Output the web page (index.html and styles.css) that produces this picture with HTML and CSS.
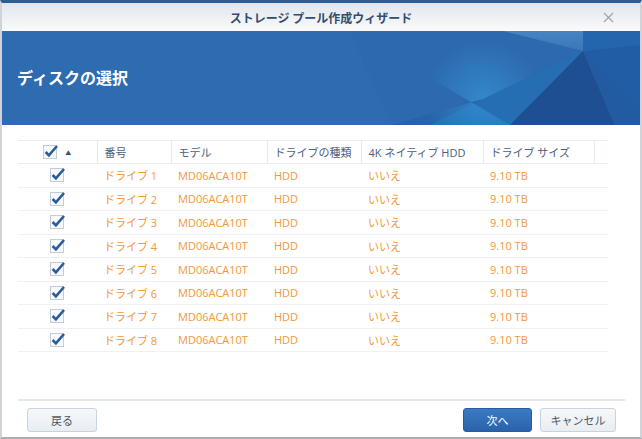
FILE: index.html
```html
<!DOCTYPE html>
<html lang="ja">
<head>
    <meta charset="UTF-8">
    <title>ストレージ プール作成ウィザード</title>
    <link rel="stylesheet" href="styles.css">
</head>
<body>
<div class="window">
    <div class="titlebar">
        <span></span>
        <span class="title">ストレージ プール作成ウィザード</span>
        <span class="close">
            <svg width="11" height="11" viewBox="0 0 11 11"><path d="M1 1 L10 10 M10 1 L1 10" stroke="#a0a6ad" stroke-width="1.3" fill="none"/></svg>
        </span>
    </div>

    <div class="banner">
        <svg class="banner_bg" viewBox="2 31 638 94" preserveAspectRatio="none">
            <defs>
                <radialGradient id="glow" cx="483" cy="99" r="60" gradientUnits="userSpaceOnUse">
                    <stop offset="0" stop-color="#3a9fe2" stop-opacity="0.55"/>
                    <stop offset="1" stop-color="#3a9fe2" stop-opacity="0"/>
                </radialGradient>
                <linearGradient id="wedge" x1="0" y1="0" x2="0" y2="1">
                    <stop offset="0" stop-color="#4784c2"/>
                    <stop offset="1" stop-color="#3877b9"/>
                </linearGradient>
            </defs>
            <polygon points="350,31 503,31 583,51 483,99 392,125" fill="#2c69ae"/>
            <polygon points="503,31 583,31 583,51" fill="url(#wedge)"/>
            <polygon points="583,31 640,31 640,45 583,51" fill="#2366ad"/>
            <polygon points="583,51 640,45 640,108" fill="#215da4"/>
            <polygon points="483,99 583,51 510,125 430,125" fill="#266eb4"/>
            <polygon points="583,51 510,125 615,125" fill="#1e4f92"/>
            <polygon points="583,51 640,108 640,125 615,125" fill="#225ba1"/>
            <polygon points="392,125 483,99 430,125" fill="#2862a8"/>
            <polygon points="350,31 583,51 483,99 392,125 430,125 510,125" fill="url(#glow)"/>
        </svg>
        <h1 class="banner_title">ディスクの選択</h1>
    </div>

    <div class="content">
        <table class="disks">
            <colgroup>
                <col class="c_check">
                <col class="c_no">
                <col class="c_model">
                <col class="c_type">
                <col class="c_4k">
                <col class="c_size">
                <col class="c_pad">
            </colgroup>
            <thead>
            <tr>
                <th class="check_cell">
                    <span class="head_check">
                        <svg class="cb" viewBox="0 0 16 16"><rect x="0.5" y="1.5" width="13" height="13" fill="#f7f9fc" stroke="#c3ccd8"/><path d="M2.6 8 L5.9 11.4 L14 2" fill="none" stroke="#2b5c9a" stroke-width="2.6"/></svg>
                        <span class="sort">▲</span>
                    </span>
                </th>
                <th>番号</th>
                <th>モデル</th>
                <th>ドライブの種類</th>
                <th>4K ネイティブ HDD</th>
                <th>ドライブ サイズ</th>
                <th class="pad"></th>
            </tr>
            </thead>
            <tbody>
            <tr>
                <td class="check_cell"><svg class="cb" viewBox="0 0 16 16"><rect x="0.5" y="1.5" width="13" height="13" fill="#f7f9fc" stroke="#c3ccd8"/><path d="M2.6 8 L5.9 11.4 L14 2" fill="none" stroke="#2b5c9a" stroke-width="2.6"/></svg></td>
                <td>ドライブ 1</td><td>MD06ACA10T</td><td>HDD</td><td>いいえ</td><td>9.10 TB</td><td></td>
            </tr>
            <tr>
                <td class="check_cell"><svg class="cb" viewBox="0 0 16 16"><rect x="0.5" y="1.5" width="13" height="13" fill="#f7f9fc" stroke="#c3ccd8"/><path d="M2.6 8 L5.9 11.4 L14 2" fill="none" stroke="#2b5c9a" stroke-width="2.6"/></svg></td>
                <td>ドライブ 2</td><td>MD06ACA10T</td><td>HDD</td><td>いいえ</td><td>9.10 TB</td><td></td>
            </tr>
            <tr>
                <td class="check_cell"><svg class="cb" viewBox="0 0 16 16"><rect x="0.5" y="1.5" width="13" height="13" fill="#f7f9fc" stroke="#c3ccd8"/><path d="M2.6 8 L5.9 11.4 L14 2" fill="none" stroke="#2b5c9a" stroke-width="2.6"/></svg></td>
                <td>ドライブ 3</td><td>MD06ACA10T</td><td>HDD</td><td>いいえ</td><td>9.10 TB</td><td></td>
            </tr>
            <tr>
                <td class="check_cell"><svg class="cb" viewBox="0 0 16 16"><rect x="0.5" y="1.5" width="13" height="13" fill="#f7f9fc" stroke="#c3ccd8"/><path d="M2.6 8 L5.9 11.4 L14 2" fill="none" stroke="#2b5c9a" stroke-width="2.6"/></svg></td>
                <td>ドライブ 4</td><td>MD06ACA10T</td><td>HDD</td><td>いいえ</td><td>9.10 TB</td><td></td>
            </tr>
            <tr>
                <td class="check_cell"><svg class="cb" viewBox="0 0 16 16"><rect x="0.5" y="1.5" width="13" height="13" fill="#f7f9fc" stroke="#c3ccd8"/><path d="M2.6 8 L5.9 11.4 L14 2" fill="none" stroke="#2b5c9a" stroke-width="2.6"/></svg></td>
                <td>ドライブ 5</td><td>MD06ACA10T</td><td>HDD</td><td>いいえ</td><td>9.10 TB</td><td></td>
            </tr>
            <tr>
                <td class="check_cell"><svg class="cb" viewBox="0 0 16 16"><rect x="0.5" y="1.5" width="13" height="13" fill="#f7f9fc" stroke="#c3ccd8"/><path d="M2.6 8 L5.9 11.4 L14 2" fill="none" stroke="#2b5c9a" stroke-width="2.6"/></svg></td>
                <td>ドライブ 6</td><td>MD06ACA10T</td><td>HDD</td><td>いいえ</td><td>9.10 TB</td><td></td>
            </tr>
            <tr>
                <td class="check_cell"><svg class="cb" viewBox="0 0 16 16"><rect x="0.5" y="1.5" width="13" height="13" fill="#f7f9fc" stroke="#c3ccd8"/><path d="M2.6 8 L5.9 11.4 L14 2" fill="none" stroke="#2b5c9a" stroke-width="2.6"/></svg></td>
                <td>ドライブ 7</td><td>MD06ACA10T</td><td>HDD</td><td>いいえ</td><td>9.10 TB</td><td></td>
            </tr>
            <tr>
                <td class="check_cell"><svg class="cb" viewBox="0 0 16 16"><rect x="0.5" y="1.5" width="13" height="13" fill="#f7f9fc" stroke="#c3ccd8"/><path d="M2.6 8 L5.9 11.4 L14 2" fill="none" stroke="#2b5c9a" stroke-width="2.6"/></svg></td>
                <td>ドライブ 8</td><td>MD06ACA10T</td><td>HDD</td><td>いいえ</td><td>9.10 TB</td><td></td>
            </tr>
            </tbody>
        </table>
    </div>

    <div class="footer">
        <div class="footer_inner">
            <a href="javascript:;" class="btn">戻る</a>
            <span class="spacer"></span>
            <a href="javascript:;" class="btn btn_primary">次へ</a>
            <a href="javascript:;" class="btn btn_cancel">キャンセル</a>
        </div>
    </div>
</div>
</body>
</html>
```

FILE: styles.css
```css
* {
    margin: 0;
    padding: 0;
    box-sizing: border-box;
}

html, body {
    width: 642px;
    height: 439px;
    overflow: hidden;
    background: #fff;
}

body {
    font-family: "Open Sans", "Noto Sans CJK JP", sans-serif;
    font-size: 11px;
}

body a {
    text-decoration: none;
}

.window {
    width: 642px;
    height: 439px;
    display: flex;
    flex-direction: column;
    border-top: 3px solid #2d5c97;
    border-left: 2px solid #d0d3d7;
    border-right: 2px solid #d0d3d7;
    border-bottom: 2px solid #a9acb1;
    background: #fff;
}

/* title bar */
.titlebar {
    height: 28px;
    flex: none;
    display: grid;
    grid-template-columns: 48px 1fr 48px;
    align-items: center;
    background: linear-gradient(#e1e6ee, #f9fbfc);
}

.titlebar .title {
    text-align: center;
    font-family: "Noto Sans CJK JP", sans-serif;
    font-size: 12px;
    font-weight: bold;
    color: #344d6e;
}

.titlebar .close {
    display: flex;
    padding-left: 11px;
}

/* banner */
.banner {
    height: 94px;
    flex: none;
    position: relative;
    display: flex;
    align-items: center;
    padding-left: 15px;
    background: #2e6bb0;
    overflow: hidden;
}

.banner_bg {
    position: absolute;
    left: 0;
    top: 0;
    width: 100%;
    height: 100%;
}

.banner_title {
    position: relative;
    font-family: "Noto Sans CJK JP", sans-serif;
    font-size: 16px;
    font-weight: bold;
    color: #fff;
    margin-top: -2px;
}

/* table */
.content {
    flex: 1;
    padding: 15px 32px 0 16px;
}

.disks {
    width: 590px;
    table-layout: fixed;
    border-collapse: collapse;
}

.c_check { width: 79px; }
.c_no { width: 74px; }
.c_model { width: 96px; }
.c_type { width: 94px; }
.c_4k { width: 122px; }
.c_size { width: 111px; }
.c_pad { width: 14px; }

.disks th {
    height: 23px;
    text-align: left;
    font-weight: normal;
    color: #4b617d;
    padding-left: 7px;
    white-space: nowrap;
    border-top: 1px solid #e9eef5;
    border-bottom: 1px solid #e9eef5;
    border-right: 1px solid #e3e9f1;
}

.disks th.pad {
    border-right: none;
}

.disks td {
    height: 23.5px;
    padding-left: 7px;
    color: #f2973b;
    white-space: nowrap;
    border-bottom: 1px solid #eef1f5;
}

.disks .check_cell {
    padding-left: 0;
    text-align: center;
}

.cb {
    width: 16px;
    height: 16px;
    display: block;
}

td .cb {
    margin: 0 0 0 32px;
}

.head_check {
    display: flex;
    align-items: center;
    justify-content: center;
    gap: 6px;
}

.sort {
    font-size: 6px;
    color: #3d5372;
    margin-top: 1px;
}

/* footer */
.footer {
    height: 38px;
    flex: none;
    padding: 0 15px 0 16px;
}

.footer_inner {
    display: flex;
    align-items: flex-start;
    gap: 8px;
    padding: 7px 9px 0;
    border-top: 2px solid #e4e7eb;
    height: 100%;
}

.spacer {
    flex: 1;
}

.btn {
    width: 70px;
    height: 24px;
    line-height: 22px;
    text-align: center;
    border: 1px solid #c9d3de;
    border-radius: 3px;
    background: linear-gradient(#f5f8fb, #e8edf2);
    color: #4f5761;
    font-family: "Noto Sans CJK JP", sans-serif;
    font-size: 11px;
}

.btn_primary {
    width: 69px;
    border-color: #275d9f;
    background: linear-gradient(#3a7bc4, #2a62aa);
    color: #fff;
}

.btn_cancel {
    width: 76px;
}
```
